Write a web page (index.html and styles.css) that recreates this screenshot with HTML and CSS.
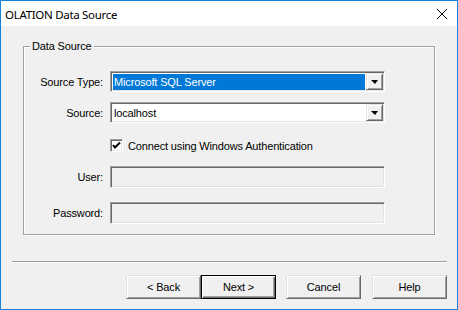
FILE: index.html
```html
<!DOCTYPE html>
<html>
<head>
<meta charset="utf-8">
<link rel="stylesheet" href="styles.css">
</head>
<body>
<div class="window">
  <div class="titlebar">
    <span class="title">OLATION Data Source</span>
    <svg class="close" width="12" height="12" viewBox="0 0 12 12"><path d="M1 1L11 11M11 1L1 11" stroke="#000" stroke-width="1" fill="none"/></svg>
  </div>
  <div class="client">
    <div class="group">
      <span class="legend">Data Source</span>
      <div class="row r1">
        <span class="label">Source Type:</span>
        <div class="combo">
          <div class="combo-text selected">Microsoft SQL Server</div>
          <div class="combo-btn"><span class="arrow"></span></div>
        </div>
      </div>
      <div class="row r2">
        <span class="label">Source:</span>
        <div class="combo">
          <div class="combo-text">localhost</div>
          <div class="combo-btn"><span class="arrow"></span></div>
        </div>
      </div>
      <div class="row r3">
        <span class="label"></span>
        <div class="check">
          <span class="box"><svg width="9" height="9" viewBox="0 0 9 9"><path d="M1 4L3 6.5L8 1.5" stroke="#000" stroke-width="2" fill="none"/></svg></span>
          <span class="check-text">Connect using Windows Authentication</span>
        </div>
      </div>
      <div class="row r4">
        <span class="label">User:</span>
        <div class="edit"></div>
      </div>
      <div class="row r5">
        <span class="label">Password:</span>
        <div class="edit"></div>
      </div>
    </div>
    <div class="separator"></div>
    <div class="buttons">
      <div class="btn">&lt; Back</div>
      <div class="btn default">Next &gt;</div>
      <div class="btn gap">Cancel</div>
      <div class="btn gap2">Help</div>
    </div>
  </div>
</div>
</body>
</html>
```
FILE: styles.css
```css
html, body {
  margin: 0;
  padding: 0;
}
body {
  width: 458px;
  height: 310px;
  overflow: hidden;
  font-family: "Liberation Sans", Arial, sans-serif;
  font-size: 11px;
  letter-spacing: -0.15px;
  color: #000;
}
.window {
  box-sizing: border-box;
  width: 458px;
  height: 310px;
  border: 1px solid #1883d7;
  display: flex;
  flex-direction: column;
  background: #f0f0f0;
}
.titlebar {
  height: 25px;
  flex: none;
  background: #fff;
  display: flex;
  align-items: center;
  justify-content: space-between;
}
.title {
  font-family: "Noto Sans", "Open Sans", sans-serif;
  font-size: 11.5px;
  padding-left: 4px;
  padding-top: 1px;
  letter-spacing: -0.3px;
}
.close {
  margin-right: 9px;
  margin-top: 1px;
}
.client {
  flex: 1;
  display: flex;
  flex-direction: column;
}
.group {
  position: relative;
  box-sizing: border-box;
  margin: 20px 0 0 22px;
  width: 412px;
  height: 189px;
  border: 1px solid #a0a0a0;
  box-shadow: inset 1px 1px 0 #fff, 1px 1px 0 #fff;
  display: flex;
  flex-direction: column;
}
.legend {
  position: absolute;
  left: 6px;
  top: -7px;
  padding: 0 2px;
  background: #f0f0f0;
  line-height: 13px;
}
.row {
  display: flex;
  align-items: center;
}
.label {
  width: 79px;
  margin-right: 7px;
  text-align: right;
  flex: none;
}
.r1 { margin-top: 24px; }
.r2 { margin-top: 10px; }
.r3 { margin-top: 16px; }
.r4 { margin-top: 14px; }
.r5 { margin-top: 14px; }
.combo {
  box-sizing: border-box;
  width: 275px;
  height: 21px;
  border-top: 1px solid #a0a0a0;
  border-left: 1px solid #a0a0a0;
  border-bottom: 1px solid #fff;
  border-right: 1px solid #fff;
  box-shadow: inset 1px 1px 0 #696969, inset -1px -1px 0 #e3e3e3;
  background: #fff;
  padding: 1px;
  display: flex;
}
.combo-text {
  flex: 1;
  margin: 1px 1px 0 1px;
  height: 16px;
  line-height: 16px;
  padding-left: 1px;
  white-space: nowrap;
}
.combo-text.selected {
  background: #0078d7;
  color: #fff;
}
.combo-btn {
  box-sizing: border-box;
  width: 17px;
  height: 17px;
  flex: none;
  background: #f0f0f0;
  border-top: 1px solid #e3e3e3;
  border-left: 1px solid #e3e3e3;
  border-right: 1px solid #696969;
  border-bottom: 1px solid #696969;
  box-shadow: inset 1px 1px 0 #fff, inset -1px -1px 0 #a0a0a0;
  display: flex;
  align-items: center;
  justify-content: center;
}
.arrow {
  width: 0;
  height: 0;
  border-left: 4px solid transparent;
  border-right: 3px solid transparent;
  border-top: 4px solid #000;
  margin-top: 1px;
}
.check {
  display: flex;
  align-items: center;
  height: 13px;
}
.box {
  box-sizing: border-box;
  width: 13px;
  height: 13px;
  border-top: 1px solid #a0a0a0;
  border-left: 1px solid #a0a0a0;
  border-bottom: 1px solid #fff;
  border-right: 1px solid #fff;
  box-shadow: inset 1px 1px 0 #696969, inset -1px -1px 0 #e3e3e3;
  background: #fff;
  display: flex;
  align-items: center;
  justify-content: center;
}
.box svg { display: block; }
.check-text {
  margin-left: 5px;
}
.edit {
  box-sizing: border-box;
  width: 275px;
  height: 22px;
  border-top: 1px solid #a0a0a0;
  border-left: 1px solid #a0a0a0;
  border-bottom: 1px solid #fff;
  border-right: 1px solid #fff;
  box-shadow: inset 1px 1px 0 #696969, inset -1px -1px 0 #e3e3e3;
  background: #f0f0f0;
}
.separator {
  margin: 26px 0 0 11px;
  width: 435px;
  height: 1px;
  background: #a0a0a0;
  border-bottom: 1px solid #fff;
}
.buttons {
  margin-top: 12px;
  display: flex;
  justify-content: flex-end;
  padding-right: 10px;
}
.btn {
  box-sizing: border-box;
  width: 75px;
  height: 24px;
  background: #f0f0f0;
  border-top: 1px solid #e3e3e3;
  border-left: 1px solid #e3e3e3;
  border-right: 1px solid #696969;
  border-bottom: 1px solid #696969;
  box-shadow: inset 1px 1px 0 #fff, inset -1px -1px 0 #a0a0a0;
  display: flex;
  align-items: center;
  justify-content: center;
}
.btn.default {
  border: 1px solid #000;
  box-shadow: inset 1px 1px 0 #fff, inset -1px -1px 0 #696969, inset -2px -2px 0 #a0a0a0;
}
.btn.gap { margin-left: 10px; }
.btn.gap2 { margin-left: 11px; }
```
